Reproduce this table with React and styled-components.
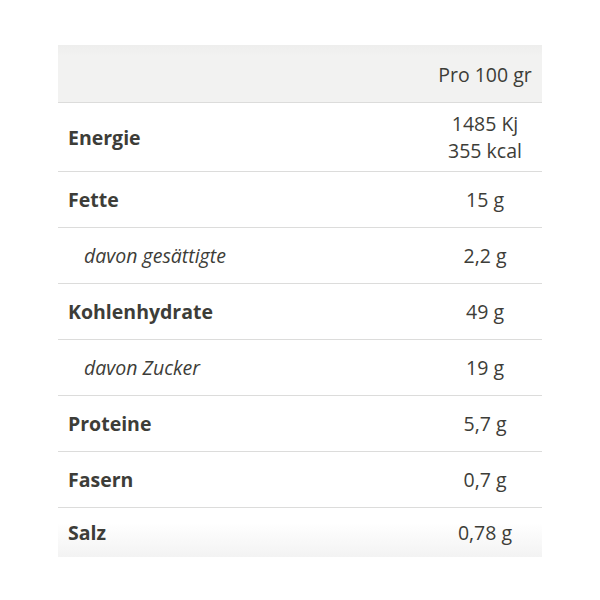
import React from 'react';
import styled, { createGlobalStyle, css } from 'styled-components';

const GlobalStyle = createGlobalStyle`
  html, body {
    margin: 0;
    padding: 0;
    background: #fff;
  }
  body {
    font-family: 'Open Sans', 'Liberation Sans', sans-serif;
    color: #3d3d38;
  }
`;

const Page = styled.div`
  width: 600px;
  height: 600px;
  padding: 45px 58px 0;
  box-sizing: border-box;
`;

const Table = styled.div`
  display: grid;
  grid-template-columns: 1fr 114px;
  width: 484px;
`;

const HeadCell = styled.div`
  display: flex;
  align-items: center;
  justify-content: center;
  padding: 2px 10px 0;
  height: 55px;
  font-size: 19.5px;
  line-height: 27px;
  background: linear-gradient(#eeeeed, #f2f2f1 20%, #f2f2f1);
  border-bottom: 1px solid #dcdcdb;
`;

const Cell = styled.div`
  min-height: 56px;
  display: flex;
  align-items: center;
  padding: 7px 10px;
  box-sizing: border-box;
  font-size: 19.5px;
  line-height: 27px;
  border-bottom: 1px solid #dcdcdb;
  ${p =>
    p.$last &&
    css`
      border-bottom: none;
      min-height: 49px;
      background: linear-gradient(#ffffff 30%, #f3f3f3);
    `}
`;

const Label = styled(Cell)`
  font-weight: 700;
  ${p =>
    p.$sub &&
    css`
      font-weight: 400;
      font-style: italic;
      padding-left: 26px;
    `}
`;

const Value = styled(Cell)`
  flex-direction: column;
  justify-content: center;
  text-align: center;
`;

const rows = [
  { label: 'Energie', value: ['1485 Kj', '355 kcal'] },
  { label: 'Fette', value: ['15 g'] },
  { label: 'davon gesättigte', value: ['2,2 g'], sub: true },
  { label: 'Kohlenhydrate', value: ['49 g'] },
  { label: 'davon Zucker', value: ['19 g'], sub: true },
  { label: 'Proteine', value: ['5,7 g'] },
  { label: 'Fasern', value: ['0,7 g'] },
  { label: 'Salz', value: ['0,78 g'] },
];

export default function App() {
  return (
    <>
      <GlobalStyle />
      <Page>
        <Table>
          <HeadCell />
          <HeadCell>Pro 100 gr</HeadCell>
          {rows.map((r, i) => {
            const last = i === rows.length - 1;
            return (
              <React.Fragment key={r.label}>
                <Label $sub={r.sub} $last={last}>{r.label}</Label>
                <Value $last={last}>
                  {r.value.map(v => (
                    <span key={v}>{v}</span>
                  ))}
                </Value>
              </React.Fragment>
            );
          })}
        </Table>
      </Page>
    </>
  );
}
